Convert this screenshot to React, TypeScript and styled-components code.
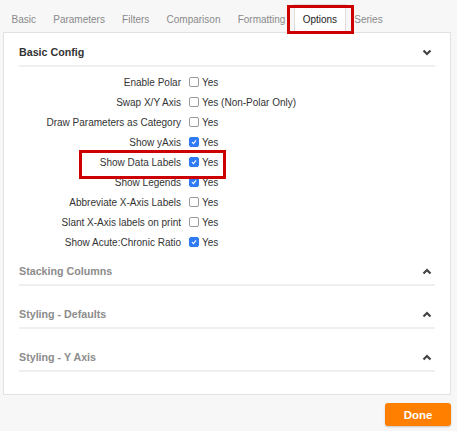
import styled, { createGlobalStyle } from "styled-components";

const GlobalStyle = createGlobalStyle`
  html, body {
    margin: 0;
    padding: 0;
    background: #f7f7f7;
    font-family: "Liberation Sans", Arial, sans-serif;
  }
`;

const Page = styled.div`
  position: relative;
  width: 457px;
  height: 431px;
  padding: 3px 6px 0 3px;
  box-sizing: border-box;
`;

const TabBar = styled.div`
  display: flex;
  align-items: flex-end;
  height: 29px;
`;

const Tab = styled.div<{ $active?: boolean }>`
  position: relative;
  height: 29px;
  display: flex;
  align-items: center;
  padding: 1px 7.6px 0;
  box-sizing: border-box;
  font-size: 10px;
  color: ${(p) => (p.$active ? "#222" : "#8a8a8a")};
  background: ${(p) => (p.$active ? "#fff" : "transparent")};
  border: 1px solid ${(p) => (p.$active ? "#dedede" : "transparent")};
  border-bottom: none;
  margin-bottom: -1px;
  z-index: 1;
`;

const Panel = styled.div`
  background: #fff;
  border: 1px solid #e2e2e2;
  height: 363px;
  box-sizing: border-box;
  padding: 6px 15px 0;
`;

const Section = styled.div<{ $gap: number }>`
  margin-top: ${(p) => p.$gap}px;
`;

const SectionHeader = styled.div<{ $open?: boolean }>`
  height: 26px;
  display: flex;
  align-items: center;
  justify-content: space-between;
  border-bottom: 2px solid #efefef;
  font-size: 10.7px;
  font-weight: bold;
  color: ${(p) => (p.$open ? "#333" : "#8c8c8c")};
  padding-right: 3px;
`;

const OptionGrid = styled.div`
  display: grid;
  grid-template-columns: 170px 1fr;
  grid-auto-rows: 20px;
  padding-top: 5px;
  font-size: 10px;
  color: #333;
`;

const Label = styled.div`
  text-align: right;
  align-self: center;
  padding-right: 8px;
`;

const Value = styled.div`
  display: flex;
  align-items: center;
  gap: 3px;
`;

const Box = styled.span<{ $checked?: boolean }>`
  width: 10px;
  height: 10px;
  box-sizing: border-box;
  border-radius: 2px;
  border: 1px solid ${(p) => (p.$checked ? "#2f7bf5" : "#9a9a9a")};
  background: ${(p) => (p.$checked ? "#2f7bf5" : "#fff")};
  display: inline-flex;
  align-items: center;
  justify-content: center;
`;

const Footer = styled.div`
  display: flex;
  justify-content: flex-end;
  padding-top: 8px;
`;

const DoneButton = styled.button`
  width: 66px;
  height: 23px;
  border: none;
  border-radius: 3px;
  background: #ff8000;
  color: #fff;
  font-family: "Liberation Sans", Arial, sans-serif;
  font-size: 11.5px;
  font-weight: bold;
  box-shadow: 0 1px 2px rgba(0, 0, 0, 0.2);
`;

const Highlight = styled.div`
  position: absolute;
  border: 3px solid #cc0000;
  box-sizing: border-box;
  pointer-events: none;
  z-index: 2;
`;

const Chevron = ({ up }: { up?: boolean }) => (
  <svg width="10" height="7" viewBox="0 0 10 7">
    <path
      d={up ? "M1.5 5.5 L5 2 L8.5 5.5" : "M1.5 1.5 L5 5 L8.5 1.5"}
      fill="none"
      stroke="#444"
      strokeWidth="2.2"
    />
  </svg>
);

const Checkbox = ({ checked }: { checked?: boolean }) => (
  <Box $checked={checked}>
    {checked && (
      <svg width="6" height="6" viewBox="0 0 6 6">
        <path d="M1 3.2 L2.5 4.6 L5 1.3" fill="none" stroke="#fff" strokeWidth="1.1" />
      </svg>
    )}
  </Box>
);

const tabs = ["Basic", "Parameters", "Filters", "Comparison", "Formatting", "Options", "Series"];

const options: { label: string; checked: boolean; text?: string }[] = [
  { label: "Enable Polar", checked: false },
  { label: "Swap X/Y Axis", checked: false, text: "Yes (Non-Polar Only)" },
  { label: "Draw Parameters as Category", checked: false },
  { label: "Show yAxis", checked: true },
  { label: "Show Data Labels", checked: true },
  { label: "Show Legends", checked: true },
  { label: "Abbreviate X-Axis Labels", checked: false },
  { label: "Slant X-Axis labels on print", checked: false },
  { label: "Show Acute:Chronic Ratio", checked: true },
];

const collapsed = ["Stacking Columns", "Styling - Defaults", "Styling - Y Axis"];

export default function App() {
  return (
    <>
      <GlobalStyle />
      <Page>
        <TabBar>
          {tabs.map((t) => (
            <Tab key={t} $active={t === "Options"}>
              {t}
            </Tab>
          ))}
        </TabBar>
        <Panel>
          <Section $gap={0}>
            <SectionHeader $open>
              <span>Basic Config</span>
              <Chevron />
            </SectionHeader>
            <OptionGrid>
              {options.map((o) => (
                <>
                  <Label key={o.label}>{o.label}</Label>
                  <Value>
                    <Checkbox checked={o.checked} />
                    <span>{o.text ?? "Yes"}</span>
                  </Value>
                </>
              ))}
            </OptionGrid>
          </Section>
          {collapsed.map((c, i) => (
            <Section key={c} $gap={i === 0 ? 6 : 15}>
              <SectionHeader>
                <span>{c}</span>
                <Chevron up />
              </SectionHeader>
            </Section>
          ))}
        </Panel>
        <Footer>
          <DoneButton>Done</DoneButton>
        </Footer>
        <Highlight style={{ left: 287, top: 5, width: 67, height: 29 }} />
        <Highlight style={{ left: 79, top: 150, width: 147, height: 29 }} />
      </Page>
    </>
  );
}
